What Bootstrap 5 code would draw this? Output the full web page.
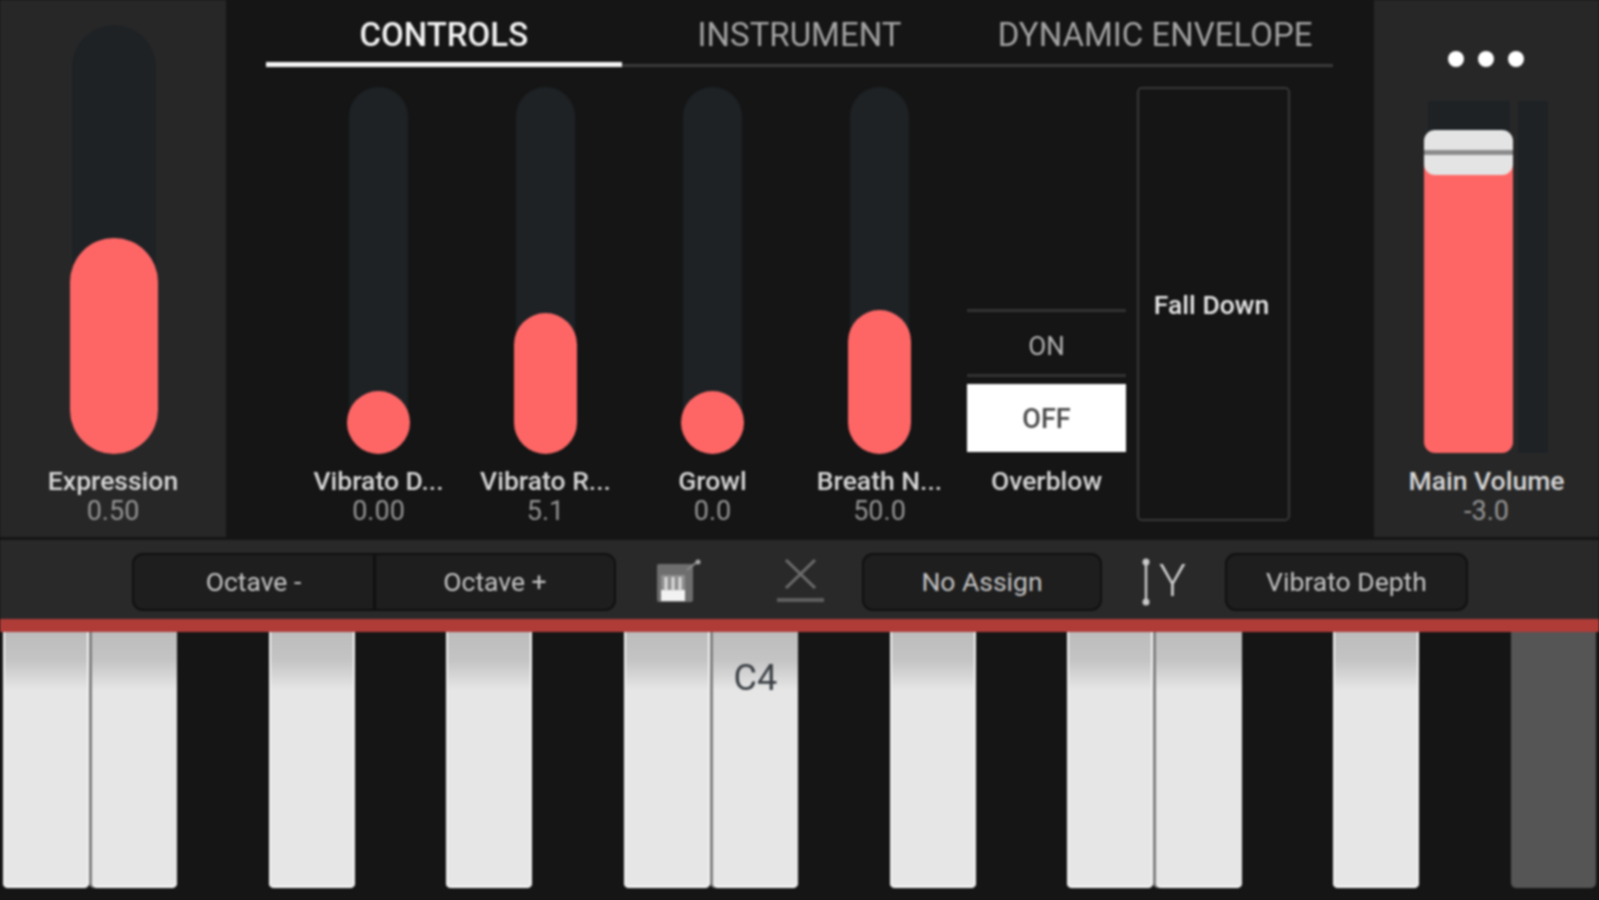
<!DOCTYPE html>
<html lang="en">
<head>
  <meta charset="UTF-8" />
  <meta name="viewport" content="width=device-width, initial-scale=1" />
  <title>Synth Controls</title>
  <link href="https://cdn.jsdelivr.net/npm/bootstrap@5.3.0/dist/css/bootstrap.min.css" rel="stylesheet">
  <style>
    body {
      background-color: #151515;
      font-family: Roboto, "Liberation Sans", sans-serif;
      overflow: hidden;
    }
    .app-root {
      width: 1599px;
      height: 900px;
      filter: blur(0.8px);
    }
    .top-area { height: 540px; }
    .side-panel {
      height: 537px;
      background: #272727;
      flex: none;
    }
    .side-left { width: 226px; padding-top: 25px; }
    .side-right { width: 225px; position: relative; }
    .center-area { width: 1148px; }

    .tab-bar {
      margin-left: 40px;
      width: 1067px;
      height: 67px;
    }
    .tab-bar .nav-link {
      height: 67px;
      padding: 16px 0 0;
      font-size: 33px;
      line-height: 38px;
      color: #a3a3a3;
      border-bottom: 3px solid #3a3a3a;
      border-radius: 0;
      white-space: nowrap;
    }
    .tab-bar .nav-link.active-tab {
      color: #f2f2f2;
      font-weight: 500;
      border-bottom: 5px solid #f4f4f4;
    }

    .strip-row {
      padding-left: 69px;
      margin-top: 20px;
    }
    .strip {
      width: 167px;
      flex: none;
    }
    .strip-box {
      height: 367px;
      display: flex;
      justify-content: center;
      align-items: flex-end;
    }
    .side-left .strip { width: 226px; }
    .side-left .strip-box { height: 429px; padding-left: 2px; }
    .track {
      position: relative;
      width: 59px;
      height: 100%;
      background: #1e2225;
      border-radius: 30px;
    }
    .side-left .track { width: 84px; border-radius: 42px; }
    .track-fill {
      position: absolute;
      left: -2px;
      right: -2px;
      bottom: 0;
      background: #fe6666;
      border-radius: 32px;
    }
    .side-left .track-fill { border-radius: 45px; }
    .strip-name {
      margin-top: 12px;
      font-size: 26.5px;
      line-height: 30px;
      font-weight: 500;
      color: #d6d6d6;
      text-align: center;
      white-space: nowrap;
    }
    .strip-val {
      font-size: 27px;
      line-height: 30px;
      color: #959595;
      text-align: center;
    }

    .toggle-box {
      height: 367px;
      display: flex;
      flex-direction: column;
      justify-content: flex-end;
      padding: 0 4px 2px;
    }
    .toggle-on {
      height: 68px;
      border-top: 3px solid #333;
      border-bottom: 3px solid #333;
      margin-bottom: 7px;
      line-height: 69px;
      text-align: center;
      font-size: 26px;
      color: #b5b5b5;
    }
    .toggle-off {
      height: 68px;
      background: #fff;
      line-height: 71px;
      text-align: center;
      font-size: 27px;
      font-weight: 500;
      color: #4a4a4a;
    }
    .fall-box {
      width: 153px;
      height: 434px;
      margin-left: 7px;
      border: 2px solid #383838;
      border-radius: 5px;
      font-size: 26.5px;
      font-weight: 500;
      color: #e6e6e6;
      padding-top: 2px;
      padding-right: 4px;
    }

    .dots-row {
      height: 16px;
      margin: 51px 0 0 74px;
      gap: 14px;
    }
    .dot {
      width: 16px;
      height: 16px;
      background: #fff;
      border-radius: 50%;
    }
    .fader-wrap {
      margin: 34px 0 0 54px;
      height: 352px;
      gap: 8px;
    }
    .fader-main {
      position: relative;
      width: 82px;
      background: #1e2225;
    }
    .fader-side {
      width: 30px;
      background: #1e2225;
    }
    .fader-fill {
      position: absolute;
      left: -4px;
      right: -3px;
      bottom: 0;
      background: #fe6666;
      border-radius: 0 0 11px 11px;
    }
    .fader-thumb {
      position: absolute;
      left: -4px;
      right: -3px;
      top: 29px;
      height: 45px;
      border-radius: 11px;
      background: linear-gradient(#e4e4e4 0 20px, #8c8c8c 20px 25px, #e4e4e4 25px);
    }
    .side-right .strip { width: 225px; margin-top: 13px; }
    .side-right .strip-name { margin-top: 0; }

    .band {
      height: 79px;
      background: #292929;
      padding: 13px 0 0 132px;
    }
    .tool-btn, .tool-btn:hover {
      height: 58px;
      padding: 0;
      background: #1e1e1e;
      border: 2px solid #101010;
      border-radius: 11px;
      color: #c4c4c4;
      font-size: 26.5px;
      line-height: 54px;
    }
    .octave-group { width: 484px; }
    .btn-group > .octave-low { flex: 0 0 243px; }
    .assign-btn { width: 240px; margin-left: 37px; }
    .depth-btn { width: 243px; margin-left: 39px; }
    .piano-icon { margin: 6px 0 0 39px; }
    .cross-icon { margin-left: 75px; }
    .axis-wrap { margin-left: 39px; height: 58px; }
    .axis-letter {
      font-size: 45px;
      line-height: 58px;
      font-weight: 300;
      color: #cfcfcf;
      margin-left: 8px;
      margin-top: -2px;
    }

    .red-bar { height: 13px; background: #b03c38; }
    .keys-row { height: 268px; padding: 0 1px 12px 1.5px; }
    .key-slot {
      flex: 1 1 0;
      padding: 0 1.5px;
    }
    .key-white, .key-grey {
      height: 100%;
      border-radius: 0 0 5px 5px;
    }
    .key-white {
      background: linear-gradient(#bcbcbc 0, #c4c4c4 28px, #e6e6e6 58px);
      box-shadow: inset 2px 0 0 #f1f1f1, inset -2px 0 0 #f1f1f1, inset 0 -2px 0 #fafafa;
      color: #3b4045;
      font-size: 36px;
      text-align: center;
      padding-top: 25px;
      line-height: 42px;
    }
    .key-grey { background: #555; }
    .key-joined .key-white { box-shadow: -3px 0 0 #808080, inset 0 -2px 0 #fafafa; }
  </style>
</head>
<body>

  <div class="app-root d-flex flex-column">
    <div class="top-area d-flex">

      <div class="side-panel side-left">
        <div class="strip">
          <div class="strip-box"><div class="track"><div class="track-fill" style="height: 216px"></div></div></div>
          <div class="strip-name">Expression</div>
          <div class="strip-val">0.50</div>
        </div>
      </div>

      <div class="center-area">
        <nav class="nav nav-justified tab-bar flex-nowrap">
          <a class="nav-link active-tab" href="#">CONTROLS</a>
          <a class="nav-link" href="#">INSTRUMENT</a>
          <a class="nav-link" href="#">DYNAMIC ENVELOPE</a>
        </nav>

        <div class="d-flex strip-row">
          <div class="strip">
            <div class="strip-box"><div class="track"><div class="track-fill" style="height: 63px"></div></div></div>
            <div class="strip-name">Vibrato D...</div>
            <div class="strip-val">0.00</div>
          </div>
          <div class="strip">
            <div class="strip-box"><div class="track"><div class="track-fill" style="height: 141px"></div></div></div>
            <div class="strip-name">Vibrato R...</div>
            <div class="strip-val">5.1</div>
          </div>
          <div class="strip">
            <div class="strip-box"><div class="track"><div class="track-fill" style="height: 63px"></div></div></div>
            <div class="strip-name">Growl</div>
            <div class="strip-val">0.0</div>
          </div>
          <div class="strip">
            <div class="strip-box"><div class="track"><div class="track-fill" style="height: 144px"></div></div></div>
            <div class="strip-name">Breath N...</div>
            <div class="strip-val">50.0</div>
          </div>
          <div class="strip">
            <div class="toggle-box">
              <div class="toggle-on">ON</div>
              <div class="toggle-off">OFF</div>
            </div>
            <div class="strip-name">Overblow</div>
          </div>
          <div class="fall-box d-flex align-items-center justify-content-center">Fall Down</div>
        </div>
      </div>

      <div class="side-panel side-right">
        <div class="d-flex dots-row">
          <div class="dot"></div>
          <div class="dot"></div>
          <div class="dot"></div>
        </div>
        <div class="d-flex fader-wrap">
          <div class="fader-main">
            <div class="fader-fill" style="height: 300px"></div>
            <div class="fader-thumb"></div>
          </div>
          <div class="fader-side"></div>
        </div>
        <div class="strip">
          <div class="strip-name">Main Volume</div>
          <div class="strip-val">-3.0</div>
        </div>
      </div>
    </div>

    <div class="band d-flex align-items-start">
      <div class="btn-group octave-group" role="group">
        <button type="button" class="btn tool-btn octave-low">Octave -</button>
        <button type="button" class="btn tool-btn">Octave +</button>
      </div>

      <svg class="piano-icon" width="46" height="46" viewBox="0 0 46 46">
        <rect x="2" y="5" width="36" height="38" rx="2" fill="#6e6e6e"/>
        <rect x="6" y="16" width="24" height="26" fill="#8e8e8e"/>
        <rect x="6" y="31" width="24" height="11" fill="#f2f2f2"/>
        <path d="M11 18v14M18 18v14M25 18v14" stroke="#dcdcdc" stroke-width="3"/>
        <path d="M32 11l10-8" stroke="#8a8a8a" stroke-width="2"/>
        <circle cx="43" cy="3" r="2.5" fill="#a8a8a8"/>
      </svg>

      <svg class="cross-icon" width="49" height="58" viewBox="0 0 49 58">
        <path d="M10 7L39 35M39 7L10 35" stroke="#6c6c6c" stroke-width="3" fill="none"/>
        <rect x="1" y="45" width="47" height="4" fill="#5e5e5e"/>
      </svg>

      <button type="button" class="btn tool-btn assign-btn">No Assign</button>

      <div class="axis-wrap d-flex align-items-center">
        <svg width="10" height="50" viewBox="0 0 10 50">
          <path d="M5 4V46" stroke="#c8c8c8" stroke-width="2.5"/>
          <circle cx="5" cy="5" r="3.5" fill="#c8c8c8"/>
          <circle cx="5" cy="45" r="3.5" fill="#c8c8c8"/>
        </svg>
        <span class="axis-letter">Y</span>
      </div>

      <button type="button" class="btn tool-btn depth-btn">Vibrato Depth</button>
    </div>

    <div class="red-bar"></div>

    <div class="keys-row d-flex" id="keysRow"></div>
  </div>

  <script>
    // w = white key, j = white key touching the previous one, g = grey key, - = gap
    const layout = ['w','j','-','w','-','w','-','w','j','-','w','-','w','j','-','w','-','g'];
    const keysRow = document.getElementById('keysRow');

    layout.forEach((type, i) => {
      const slot = document.createElement('div');
      slot.className = 'key-slot';
      if (type !== '-') {
        const key = document.createElement('div');
        key.className = type === 'g' ? 'key-grey' : 'key-white';
        if (i === 8) key.textContent = 'C4';
        if (type === 'j') slot.classList.add('key-joined');
        slot.appendChild(key);
      }
      keysRow.appendChild(slot);
    });
  </script>
  <script src="https://cdn.jsdelivr.net/npm/bootstrap@5.3.0/dist/js/bootstrap.bundle.min.js"></script>
</body>
</html>
